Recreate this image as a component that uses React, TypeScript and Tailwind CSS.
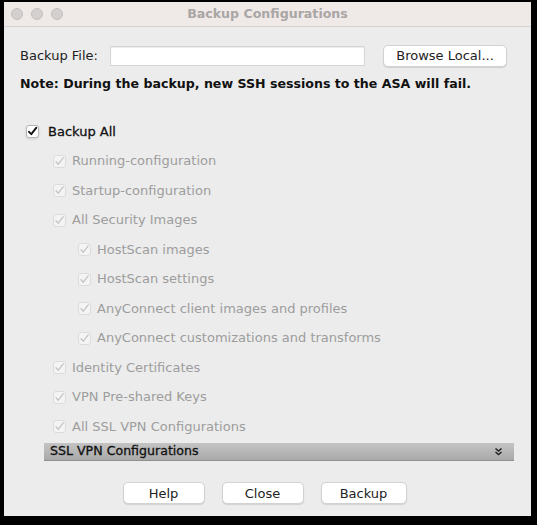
import React from 'react';

const items: { label: string; level: number }[] = [
  { label: 'Running-configuration', level: 1 },
  { label: 'Startup-configuration', level: 1 },
  { label: 'All Security Images', level: 1 },
  { label: 'HostScan images', level: 2 },
  { label: 'HostScan settings', level: 2 },
  { label: 'AnyConnect client images and profiles', level: 2 },
  { label: 'AnyConnect customizations and transforms', level: 2 },
  { label: 'Identity Certificates', level: 1 },
  { label: 'VPN Pre-shared Keys', level: 1 },
  { label: 'All SSL VPN Configurations', level: 1 },
];

const Check: React.FC<{ disabled?: boolean }> = ({ disabled }) => (
  <span
    className={
      disabled
        ? 'flex h-[13px] w-[13px] items-center justify-center rounded-[3px] border border-[#dcdcdc] bg-[#f4f4f4]'
        : 'flex h-[13px] w-[13px] items-center justify-center rounded-[3px] border border-[#b5b5b5] bg-white shadow-sm'
    }
  >
    <svg width="11" height="11" viewBox="0 0 11 11">
      <path
        d="M2 5.8 L4.3 8.2 L9.2 1.8"
        fill="none"
        stroke={disabled ? '#c4c4c4' : '#111'}
        strokeWidth={disabled ? 1.3 : 1.9}
        strokeLinecap="round"
        strokeLinejoin="round"
      />
    </svg>
  </span>
);

const MacButton: React.FC<{ children: React.ReactNode; className?: string }> = ({ children, className }) => (
  <button
    className={
      'h-[22px] rounded-[5px] border border-[#d2d2d2] bg-white text-[13px] text-[#222] shadow-[0_1px_1px_rgba(0,0,0,0.12)] ' +
      (className || '')
    }
  >
    {children}
  </button>
);

const App: React.FC = () => {
  return (
    <div className="h-[525px] w-[537px] bg-black pl-[4px] pr-[6px] pt-[2px] pb-[9px] font-['DejaVu_Sans',sans-serif]">
      <div className="flex h-full flex-col bg-[#ececec]">
        {/* Title bar */}
        <div className="relative flex h-[25px] items-center border-b border-[#d6d3d2] bg-[#efe9e7]">
          <div className="flex gap-[8px] pl-[7px]">
            <span className="h-[12px] w-[12px] rounded-full border border-[#c2bfbe] bg-[#d3d0cf]" />
            <span className="h-[12px] w-[12px] rounded-full border border-[#c2bfbe] bg-[#d3d0cf]" />
            <span className="h-[12px] w-[12px] rounded-full border border-[#c2bfbe] bg-[#d3d0cf]" />
          </div>
          <div className="absolute inset-0 flex items-center justify-center text-[12.6px] font-bold text-[#a9a6a5]">
            Backup Configurations
          </div>
        </div>

        {/* Body */}
        <div className="flex flex-1 flex-col px-[16px]">
          <div className="mt-[18px] flex items-center">
            <span className="w-[90px] text-[13px] text-[#222]">Backup File:</span>
            <input
              type="text"
              className="h-[20px] w-[255px] border border-[#d6d6d6] bg-white shadow-[inset_0_1px_1px_rgba(0,0,0,0.08)] outline-none"
            />
            <MacButton className="ml-[18px] w-[124px]">Browse Local...</MacButton>
          </div>
          <div className="mt-[8px] text-[12.6px] font-bold text-[#111]">
            Note: During the backup, new SSH sessions to the ASA will fail.
          </div>

          <div className="mt-[23px] flex h-[29.5px] items-center gap-[9px] pl-[6px]">
            <Check />
            <span className="text-[13px] text-[#111] [-webkit-text-stroke:0.3px_#111]">Backup All</span>
          </div>
          {items.map((it) => (
            <div
              key={it.label}
              className={
                'flex h-[29.5px] items-center gap-[6px] ' + (it.level === 1 ? 'pl-[33px]' : 'pl-[58px]')
              }
            >
              <Check disabled />
              <span className="text-[13px] text-[#9d9d9d]">{it.label}</span>
            </div>
          ))}

          <div className="ml-[24px] mr-[1px] mt-[2px] flex h-[18px] items-center justify-between border-b border-[#8f8f8f] bg-gradient-to-b from-[#c4c4c4] to-[#a9a9a9] px-[6px]">
            <span className="text-[12.6px] text-[#111] [-webkit-text-stroke:0.3px_#111]">SSL VPN Configurations</span>
            <svg width="9" height="9" viewBox="0 0 9 9" className="mr-[5px]">
              <path d="M1.5 1.5 L4.5 4 L7.5 1.5 M1.5 5 L4.5 7.5 L7.5 5" fill="none" stroke="#222" strokeWidth="1.5" />
            </svg>
          </div>

          <div className="mt-[21px] flex justify-center gap-[17px] pr-[6px]">
            <MacButton className="w-[82px]">Help</MacButton>
            <MacButton className="w-[82px]">Close</MacButton>
            <MacButton className="w-[86px]">Backup</MacButton>
          </div>
        </div>
      </div>
    </div>
  );
};

export default App;
